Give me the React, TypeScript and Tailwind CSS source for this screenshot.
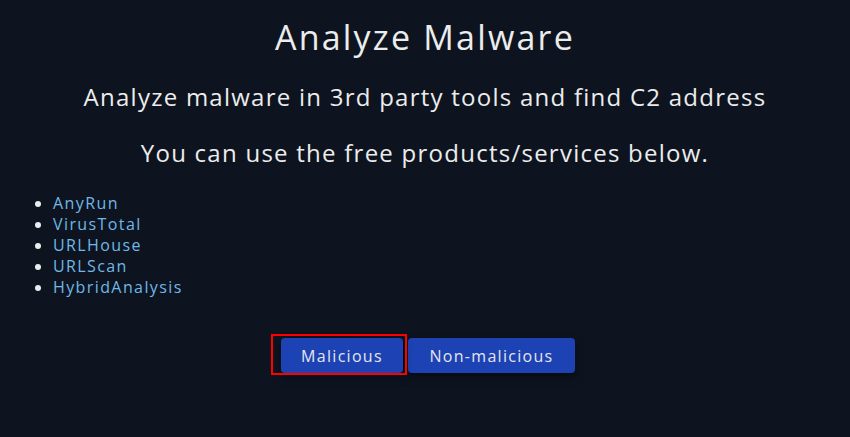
import React from "react";

export default function App() {
  const links = ["AnyRun", "VirusTotal", "URLHouse", "URLScan", "HybridAnalysis"];
  return (
    <div
      className="w-[850px] h-[437px] bg-[#0d1420] text-[#ececec] overflow-hidden"
      style={{ fontFamily: '"Open Sans", "Noto Sans", sans-serif' }}
    >
      <div className="flex flex-col items-center pt-[13px]">
        <h1 className="text-[34px] leading-[48px] font-normal tracking-[2.2px]">Analyze Malware</h1>
        <p className="mt-[18px] text-[24px] leading-[36px] tracking-[1.25px]">
          Analyze malware in 3rd party tools and find C2 address
        </p>
        <p className="mt-[20px] text-[24px] leading-[36px] tracking-[1.25px]">
          You can use the free products/services below.
        </p>
      </div>
      <ul className="mt-[22px] pl-[53px] list-disc text-[16px] leading-[21px] tracking-[1.4px] text-[#70b8e6] marker:text-[#ececec]">
        {links.map((l) => (
          <li key={l}>
            <a href="#">{l}</a>
          </li>
        ))}
      </ul>
      <div className="flex justify-center mt-[40px] gap-[5px] pl-[6px]">
        <div className="relative">
          <div className="absolute left-[-10px] right-[-4px] top-[-4px] bottom-[-2px] border-2 border-[#ff0000]" />
          <button className="h-[35px] w-[122px] rounded-[4px] bg-[#1d42b3] text-[#e4e6ee] text-[16px] tracking-[1.3px] shadow-[0_4px_8px_rgba(0,0,0,0.5)]">
            Malicious
          </button>
        </div>
        <button className="h-[35px] w-[167px] rounded-[4px] bg-[#1d42b3] text-[#e4e6ee] text-[16px] tracking-[1.3px] shadow-[0_4px_8px_rgba(0,0,0,0.5)]">
          Non-malicious
        </button>
      </div>
    </div>
  );
}
